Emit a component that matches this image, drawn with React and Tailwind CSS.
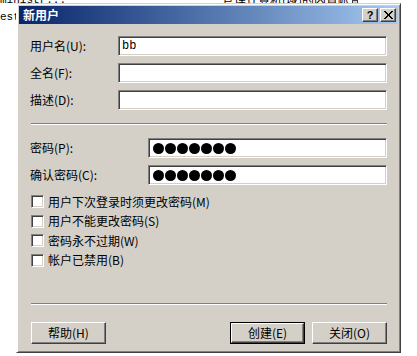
import React from "react";

const cjk = "font-['SimSun','Noto_Sans_CJK_SC',sans-serif]";

function Field({ children, className = "" }) {
  return (
    <div
      className={
        "h-[20px] bg-white border border-t-[#808080] border-l-[#808080] border-r-white border-b-white shadow-[inset_1px_1px_0_#404040,inset_-1px_-1px_0_#d4d0c8] flex items-center px-[3px] " +
        className
      }
    >
      {children}
    </div>
  );
}

function Dots() {
  return (
    <div className="flex gap-[1px] pl-[1px]">
      {[0, 1, 2, 3, 4, 5, 6].map((i) => (
        <div key={i} className="w-[11px] h-[11px] rounded-full bg-black" />
      ))}
    </div>
  );
}

function Row({ label, labelW, children }) {
  return (
    <div className="flex items-center">
      <div className={"text-[12px] text-black leading-none " + labelW}>{label}</div>
      <div className="flex-1">{children}</div>
    </div>
  );
}

function Check({ label }) {
  return (
    <div className="flex items-center h-[19.5px]">
      <div className="ml-[1px] w-[13px] h-[13px] bg-white border border-t-[#808080] border-l-[#808080] border-r-white border-b-white shadow-[inset_1px_1px_0_#404040,inset_-1px_-1px_0_#d4d0c8]" />
      <span className="ml-[4px] text-[12px] leading-none text-black">{label}</span>
    </div>
  );
}

function Btn({ children, def }) {
  const inner = (
    <div className="w-full h-full bg-[#d4d0c8] border border-t-white border-l-white border-r-[#404040] border-b-[#404040] shadow-[inset_-1px_-1px_0_#808080] flex items-center justify-center text-[12px] text-black leading-none">
      {children}
    </div>
  );
  if (def) {
    return <div className="w-[75px] h-[22px] border border-black">{inner}</div>;
  }
  return <div className="w-[75px] h-[22px]">{inner}</div>;
}

function Groove() {
  return <div className="h-[2px] border-t border-t-[#808080] border-b border-b-white" />;
}

export default function App() {
  return (
    <div className={"relative w-[417px] h-[356px] bg-white overflow-hidden " + cjk}>
      {/* desktop text behind the dialog */}
      <div className="absolute left-0 top-[-8px] text-[11px] font-['Liberation_Mono',monospace] text-black">ministr...</div>
      <div className="absolute left-0 top-[9px] text-[11px] font-['Liberation_Mono',monospace] text-black">est</div>
      <div className="absolute left-[222px] top-[-9px] text-[12px] text-black">管理计算机(域)的内置帐</div>
      <div className="absolute left-[352px] top-0 w-[6px] h-[6px] bg-[#d4d0c8] border border-[#404040]" />

      {/* dialog window */}
      <div className="relative ml-[16px] mt-[3px] w-[385px] h-[350px] bg-[#d4d0c8] border border-t-[#d4d0c8] border-l-white border-r-[#404040] border-b-[#404040] shadow-[inset_1px_1px_0_white,inset_-1px_-1px_0_#808080] p-[2px] flex flex-col">
        <div className="h-[18px] bg-gradient-to-r from-[#0a246a] to-[#a6caf0] flex items-center pl-[4px] pr-[2px]">
          <span className="text-white text-[12px] font-bold leading-none">新用户</span>
          <div className="ml-auto flex gap-[2px]">
            <div className="w-[16px] h-[14px] bg-[#d4d0c8] border border-t-white border-l-white border-r-[#404040] border-b-[#404040] shadow-[inset_-1px_-1px_0_#808080] flex items-center justify-center">
              <span className="font-['Liberation_Sans',sans-serif] font-bold text-[11px] leading-none text-black">?</span>
            </div>
            <div className="w-[16px] h-[14px] bg-[#d4d0c8] border border-t-white border-l-white border-r-[#404040] border-b-[#404040] shadow-[inset_-1px_-1px_0_#808080] flex items-center justify-center">
              <svg width="9" height="8" viewBox="0 0 9 8" shapeRendering="crispEdges">
                <path d="M0 0h2v1h-2zM7 0h2v1h-2zM1 1h2v1h-2zM6 1h2v1h-2zM2 2h2v1h-2zM5 2h2v1h-2zM3 3h3v2h-3zM2 5h2v1h-2zM5 5h2v1h-2zM1 6h2v1h-2zM6 6h2v1h-2zM0 7h2v1h-2zM7 7h2v1h-2z" fill="black" />
              </svg>
            </div>
          </div>
        </div>

        <div className="flex-1 flex flex-col pl-[11px] pr-[11px] pt-[12px]">
          <div className="flex flex-col gap-[7px]">
            <Row label="用户名(U):" labelW="w-[88px]">
              <Field>
                <span className="text-[12px] leading-none text-black font-['Liberation_Mono',monospace]">bb</span>
              </Field>
            </Row>
            <Row label="全名(F):" labelW="w-[88px]">
              <Field />
            </Row>
            <Row label="描述(D):" labelW="w-[88px]">
              <Field />
            </Row>
          </div>

          <div className="mt-[13px] ml-[1px]">
            <Groove />
          </div>

          <div className="mt-[13px] flex flex-col gap-[7px]">
            <Row label="密码(P):" labelW="w-[118px]">
              <Field>
                <Dots />
              </Field>
            </Row>
            <Row label="确认密码(C):" labelW="w-[118px]">
              <Field>
                <Dots />
              </Field>
            </Row>
          </div>

          <div className="mt-[7px] flex flex-col">
            <Check label="用户下次登录时须更改密码(M)" />
            <Check label="用户不能更改密码(S)" />
            <Check label="密码永不过期(W)" />
            <Check label="帐户已禁用(B)" />
          </div>

          <div className="mt-[33px] ml-[1px]">
            <Groove />
          </div>

          <div className="mt-[17px] flex items-center ml-[1px]">
            <Btn>帮助(H)</Btn>
            <div className="ml-auto flex gap-[7px]">
              <Btn def>创建(E)</Btn>
              <Btn>关闭(O)</Btn>
            </div>
          </div>
        </div>
      </div>
    </div>
  );
}
